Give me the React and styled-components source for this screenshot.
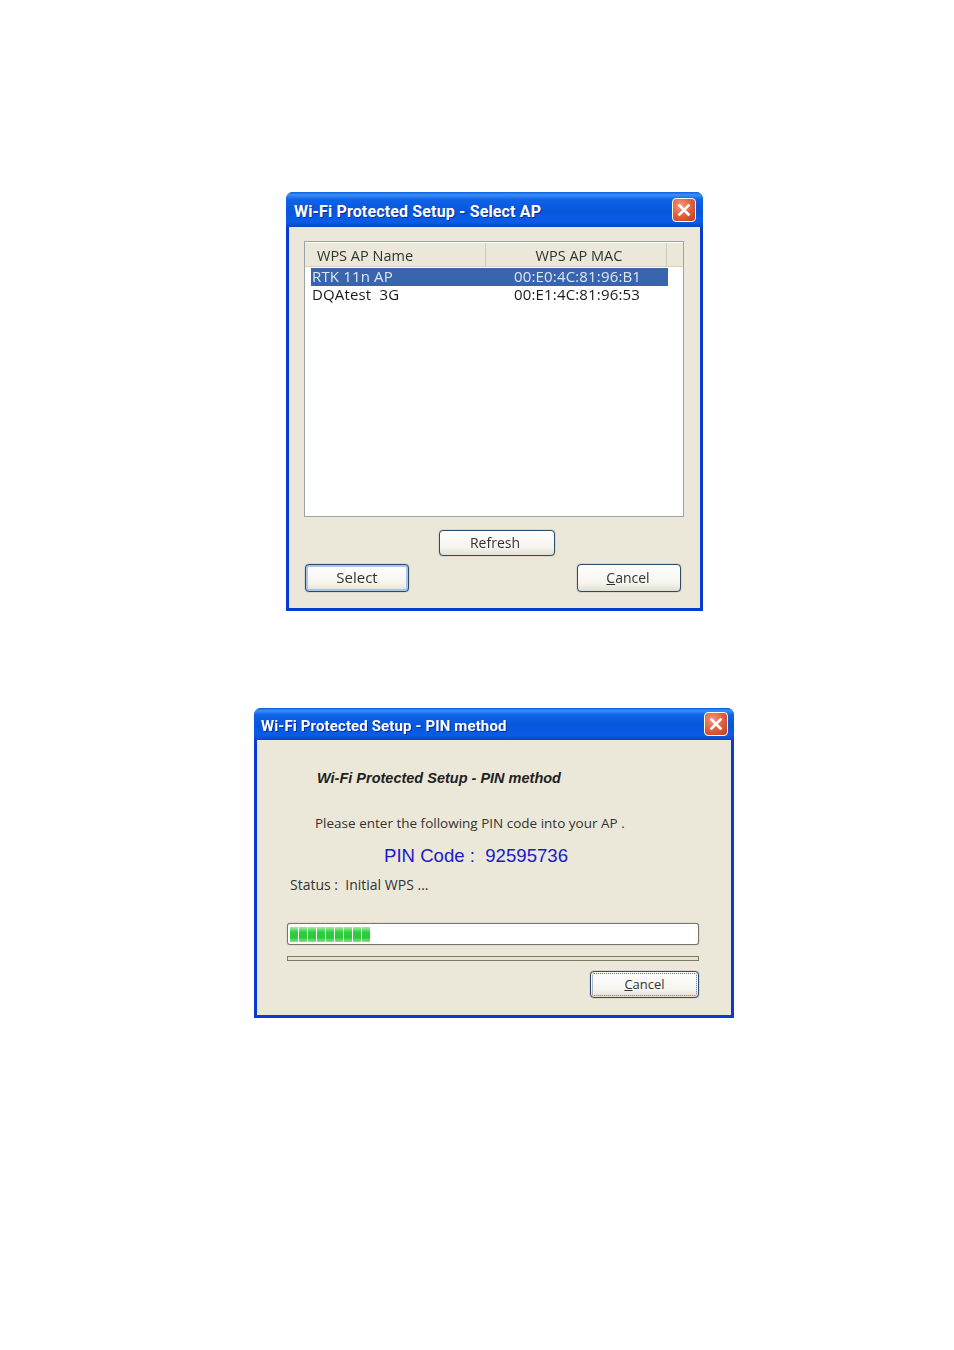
import React from "react";
import styled, { createGlobalStyle } from "styled-components";

const GlobalStyle = createGlobalStyle`
  html, body {
    margin: 0;
    padding: 0;
    background: #fff;
  }
`;

const Page = styled.div`
  width: 954px;
  height: 1350px;
  box-sizing: border-box;
  padding: 192px 0 0 35px;
  display: flex;
  flex-direction: column;
  align-items: center;
  gap: 97px;
  font-family: "Open Sans", "Liberation Sans", sans-serif;
  font-size: 14px;
  color: #222;
  filter: blur(0.3px);
`;

const Window = styled.div`
  width: ${(p) => p.$width}px;
  height: ${(p) => p.$height}px;
  margin-left: ${(p) => p.$shift || 0}px;
  box-sizing: border-box;
  display: flex;
  flex-direction: column;
  background: #0a3bd0;
  border-radius: 7px 7px 0 0;
  padding: 0 3px 3px;
`;

const TitleBar = styled.div`
  height: ${(p) => p.$height}px;
  flex: none;
  margin: 0 -3px;
  padding: 0 ${(p) => p.$closeGap}px 0 ${(p) => p.$textGap}px;
  display: flex;
  align-items: center;
  justify-content: space-between;
  border-radius: 7px 7px 0 0;
  background: linear-gradient(180deg, #0a5fe0 0%, #3a8ff5 8%, #0f62e6 22%, #0756dc 55%, #0a5ce8 85%, #0846c4 100%);
`;

const TitleText = styled.span`
  font-family: Roboto, "Liberation Sans", sans-serif;
  font-weight: 700;
  font-size: ${(p) => p.$size}px;
  letter-spacing: ${(p) => p.$spacing}px;
  color: #fff;
  text-shadow: 1px 1px 0 #0a2f9a;
  white-space: nowrap;
  padding-top: 4px;
`;

const CloseButton = styled.div`
  width: 24px;
  height: 24px;
  box-sizing: border-box;
  display: flex;
  align-items: center;
  justify-content: center;
  border: 1px solid #fff;
  border-radius: 4px;
  background: radial-gradient(circle at 35% 30%, #ee9a7e 0%, #e0603c 50%, #c23a1c 100%);
`;

const Body = styled.div`
  flex: 1;
  background: #ebe8d9;
  display: flex;
  flex-direction: column;
`;

const SelectBody = styled(Body)`
  padding: 14px 16px 16px 15px;
`;

const ListBox = styled.div`
  height: 276px;
  flex: none;
  box-sizing: border-box;
  background: #fff;
  border: 1px solid #9aa3a8;
  padding-top: 1px;
`;

const ListHeader = styled.div`
  height: 24px;
  margin-bottom: 1px;
  display: grid;
  grid-template-columns: 181px 181px 1fr;
  background: #ebe8d9;
  border-bottom: 1px solid #d6d2c2;
  box-sizing: border-box;
  font-size: 14.5px;
`;

const HeaderCell = styled.div`
  display: flex;
  align-items: center;
  justify-content: ${(p) => (p.$center ? "center" : "flex-start")};
  padding-left: ${(p) => (p.$center ? 6 : 12)}px;
  padding-top: 1px;
  border-right: ${(p) => (p.$divider ? "1px solid #cfcbba" : "none")};
  color: #333;
`;

const Row = styled.div`
  height: 18px;
  margin: 0 15px 0 6px;
  display: grid;
  grid-template-columns: 202px 1fr;
  align-items: start;
  padding-left: 1px;
  background: ${(p) => (p.$selected ? "#3a65ac" : "transparent")};
  color: ${(p) => (p.$selected ? "#dfe6f2" : "#1a1a1a")};
  font-size: 15px;
  line-height: 17px;
  white-space: pre;
`;

const NameText = styled.span`
  letter-spacing: 0.15px;
`;

const MacText = styled.span`
  letter-spacing: 0.16px;
`;

const Button = styled.div`
  width: ${(p) => p.$width}px;
  height: ${(p) => p.$height}px;
  box-sizing: border-box;
  display: flex;
  align-items: center;
  justify-content: center;
  padding: 0 ${(p) => p.$inset || 0}px 2px 0;
  border: 1px solid #2c4a6a;
  border-radius: 4px;
  background: linear-gradient(180deg, #fff 0%, #f5f4ee 70%, #e2dfd2 100%);
  box-shadow: 0 0 1px #2c4a6a ${(p) => (p.$focused ? ", inset 0 0 0 2px #a9c4ee" : "")};
  color: #333;
  font-size: ${(p) => p.$size || 14}px;
  outline: ${(p) => (p.$dotted ? "1px dotted #5a7aa8" : "none")};
  outline-offset: -3px;
`;

const CenterRow = styled.div`
  display: flex;
  justify-content: center;
  margin-top: 13px;
  padding-left: 6px;
`;

const ButtonRow = styled.div`
  display: flex;
  justify-content: space-between;
  margin-top: 8px;
  padding: 0 3px 0 1px;
`;

const PinBody = styled(Body)`
  padding: 0 32px 0 30px;
`;

const Heading = styled.div`
  margin: 29px 0 0 30px;
  font-family: "Liberation Sans", sans-serif;
  font-size: 14.5px;
  font-weight: 700;
  font-style: italic;
  line-height: 18px;
  color: #222;
`;

const Instruction = styled.div`
  margin: 27px 0 0 28px;
  font-size: 13.5px;
  line-height: 18px;
  color: #333;
`;

const PinCode = styled.div`
  margin: 13px 0 0 97px;
  font-family: "Liberation Sans", sans-serif;
  font-size: 18.6px;
  line-height: 22px;
  color: #1a1ac8;
  white-space: pre;
`;

const Status = styled.div`
  margin: 9px 0 0 3px;
  line-height: 18px;
  color: #333;
  white-space: pre;
`;

const Progress = styled.div`
  height: 22px;
  margin-top: 29px;
  box-sizing: border-box;
  display: flex;
  align-items: center;
  gap: 1px;
  padding: 0 2px;
  background: #fff;
  border: 1px solid #77766a;
  border-radius: 3px;
  box-shadow: 0 0 1px #77766a;
`;

const ProgressBlock = styled.div`
  width: 8px;
  height: 15px;
  background: linear-gradient(180deg, #a6eaa6 0%, #2fce3f 35%, #2bc83a 70%, #86e08e 100%);
`;

const Separator = styled.div`
  height: 5px;
  margin-top: 11px;
  box-sizing: border-box;
  border: 1px solid #7d7a66;
  background: #e6e3d0;
`;

const Footer = styled.div`
  display: flex;
  justify-content: flex-end;
  margin-top: 10px;
`;

const Mnemonic = styled.span`
  text-decoration: underline;
`;

function CloseIcon() {
  return (
    <svg width="14" height="14" viewBox="0 0 14 14">
      <path d="M2.5 2.5 L11.5 11.5 M11.5 2.5 L2.5 11.5" stroke="#fff" strokeWidth="2.6" strokeLinecap="square" />
    </svg>
  );
}

export default function App() {
  return (
    <Page>
      <GlobalStyle />
      <Window $width={417} $height={419}>
        <TitleBar $height={35} $closeGap={7} $textGap={8}>
          <TitleText $size={16} $spacing={0.15}>Wi-Fi Protected Setup - Select AP</TitleText>
          <CloseButton>
            <CloseIcon />
          </CloseButton>
        </TitleBar>
        <SelectBody>
          <ListBox>
            <ListHeader>
              <HeaderCell $divider>WPS AP Name</HeaderCell>
              <HeaderCell $center $divider>WPS AP MAC</HeaderCell>
              <HeaderCell />
            </ListHeader>
            <Row $selected>
              <NameText>RTK 11n AP</NameText>
              <MacText>00:E0:4C:81:96:B1</MacText>
            </Row>
            <Row>
              <NameText>DQAtest  3G</NameText>
              <MacText>00:E1:4C:81:96:53</MacText>
            </Row>
          </ListBox>
          <CenterRow>
            <Button $width={116} $height={26} $inset={4}>Refresh</Button>
          </CenterRow>
          <ButtonRow>
            <Button $width={104} $height={28} $size={15} $focused>Select</Button>
            <Button $width={104} $height={28} $inset={2}>
              <span><Mnemonic>C</Mnemonic>ancel</span>
            </Button>
          </ButtonRow>
        </SelectBody>
      </Window>

      <Window $width={480} $height={310} $shift={-1}>
        <TitleBar $height={32} $closeGap={6} $textGap={7}>
          <TitleText $size={15} $spacing={0.13}>Wi-Fi Protected Setup - PIN method</TitleText>
          <CloseButton>
            <CloseIcon />
          </CloseButton>
        </TitleBar>
        <PinBody>
          <Heading>Wi-Fi Protected Setup - PIN method</Heading>
          <Instruction>Please enter the following PIN code into your AP .</Instruction>
          <PinCode>PIN Code :  92595736</PinCode>
          <Status>Status :  Initial WPS ...</Status>
          <Progress>
            {Array.from({ length: 9 }, (_, i) => (
              <ProgressBlock key={i} />
            ))}
          </Progress>
          <Separator />
          <Footer>
            <Button $width={109} $height={27} $size={13} $dotted>
              <span><Mnemonic>C</Mnemonic>ancel</span>
            </Button>
          </Footer>
        </PinBody>
      </Window>
    </Page>
  );
}
